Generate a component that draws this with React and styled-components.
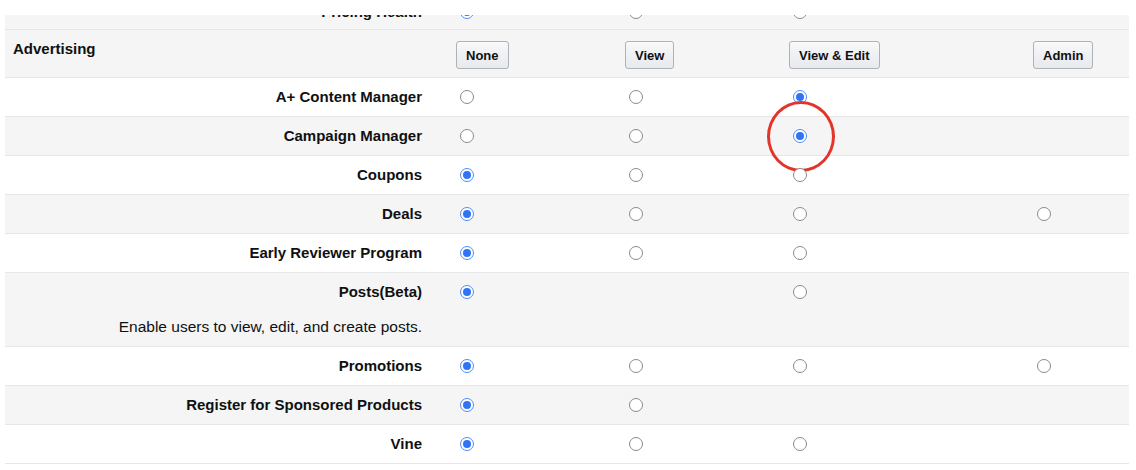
import styled, { createGlobalStyle } from "styled-components";

const GlobalStyle = createGlobalStyle`
  * { box-sizing: border-box; }
  body {
    margin: 0;
    background: #ffffff;
    font-family: "Liberation Sans", Arial, sans-serif;
    color: #0f1111;
  }
`;

const Frame = styled.div`
  width: 1136px;
  height: 470px;
  padding: 15px 7px 0 5px;
  overflow: hidden;
`;

const Clip = styled.div`
  overflow: hidden;
`;

const Table = styled.div`
  margin-top: -24px;
  display: flex;
  flex-direction: column;
`;

const Row = styled.div`
  display: grid;
  grid-template-columns: 451px 169px 164px 244px 96px;
  align-items: start;
  background: ${(p) => (p.$shade ? "#f5f5f5" : "#ffffff")};
  border-bottom: 1px solid #e6e6e6;
  padding: ${(p) => p.$pad || "9px 0 9px"};
`;

const LabelCell = styled.div`
  display: flex;
  flex-direction: column;
  align-items: ${(p) => (p.$left ? "flex-start" : "flex-end")};
  padding: ${(p) => (p.$left ? "0 0 0 8px" : "0 34px 0 0")};
`;

const Label = styled.span`
  font-size: 15px;
  font-weight: 700;
  line-height: 20px;
`;

const Description = styled.span`
  margin-top: 15px;
  font-size: 15.5px;
  line-height: 20px;
  color: #0f1111;
`;

const Cell = styled.div`
  position: relative;
  display: flex;
  align-items: flex-start;
  min-height: 20px;
`;

const Button = styled.button`
  margin-top: 2px;
  height: 28px;
  padding: 0 9px;
  font-family: inherit;
  font-size: 13px;
  font-weight: 700;
  color: #0f1111;
  background: linear-gradient(#f7f8fa, #e7e9ec);
  border: 1px solid #adb1b8;
  border-radius: 3px;
  box-shadow: 0 1px 0 rgba(255, 255, 255, 0.6) inset;
`;

const Radio = styled.span`
  position: relative;
  margin: 3px 0 0 4px;
  width: 14px;
  height: 14px;
  border-radius: 50%;
  background: #ffffff;
  border: 1px solid ${(p) => (p.$on ? "#4f8df7" : "#8a8a8a")};

  &::after {
    content: "";
    display: ${(p) => (p.$on ? "block" : "none")};
    position: absolute;
    left: 2px;
    top: 2px;
    width: 8px;
    height: 8px;
    border-radius: 50%;
    background: #2f74f5;
  }
`;

const Marker = styled.span`
  position: absolute;
  left: -22px;
  top: -25px;
  width: 68px;
  height: 71px;
  border: 3px solid #e3342a;
  border-radius: 50%;
  pointer-events: none;
`;

const rows = [
  { label: "Pricing Health", v: [1, 0, 0, null] },
  { label: "A+ Content Manager", v: [0, 0, 1, null] },
  { label: "Campaign Manager", v: [0, 0, 1, null], mark: 2 },
  { label: "Coupons", v: [1, 0, 0, null] },
  { label: "Deals", v: [1, 0, 0, 0] },
  { label: "Early Reviewer Program", v: [1, 0, 0, null] },
  {
    label: "Posts(Beta)",
    v: [1, null, 0, null],
    desc: "Enable users to view, edit, and create posts.",
  },
  { label: "Promotions", v: [1, 0, 0, 0] },
  { label: "Register for Sponsored Products", v: [1, 0, null, null] },
  { label: "Vine", v: [1, 0, 0, null] },
];

const levels = ["None", "View", "View & Edit", "Admin"];

const App = () => {
  const [partial, ...rest] = rows;
  return (
    <Frame>
      <GlobalStyle />
      <Clip>
        <Table>
          <Row $shade $pad="11px 0 7px">
            <LabelCell>
              <Label>{partial.label}</Label>
            </LabelCell>
            {partial.v.map((s, i) => (
              <Cell key={i}>{s !== null && <Radio $on={s === 1} />}</Cell>
            ))}
          </Row>
          <Row $shade $pad="9px 0 8px">
            <LabelCell $left>
              <Label>Advertising</Label>
            </LabelCell>
            {levels.map((l) => (
              <Cell key={l}>
                <Button>{l}</Button>
              </Cell>
            ))}
          </Row>
          {rest.map((r, idx) => (
            <Row key={r.label} $shade={idx % 2 === 1}>
              <LabelCell>
                <Label>{r.label}</Label>
                {r.desc && <Description>{r.desc}</Description>}
              </LabelCell>
              {r.v.map((s, i) => (
                <Cell key={i}>
                  {s !== null && <Radio $on={s === 1} />}
                  {r.mark === i && <Marker />}
                </Cell>
              ))}
            </Row>
          ))}
        </Table>
      </Clip>
    </Frame>
  );
};

export default App;
